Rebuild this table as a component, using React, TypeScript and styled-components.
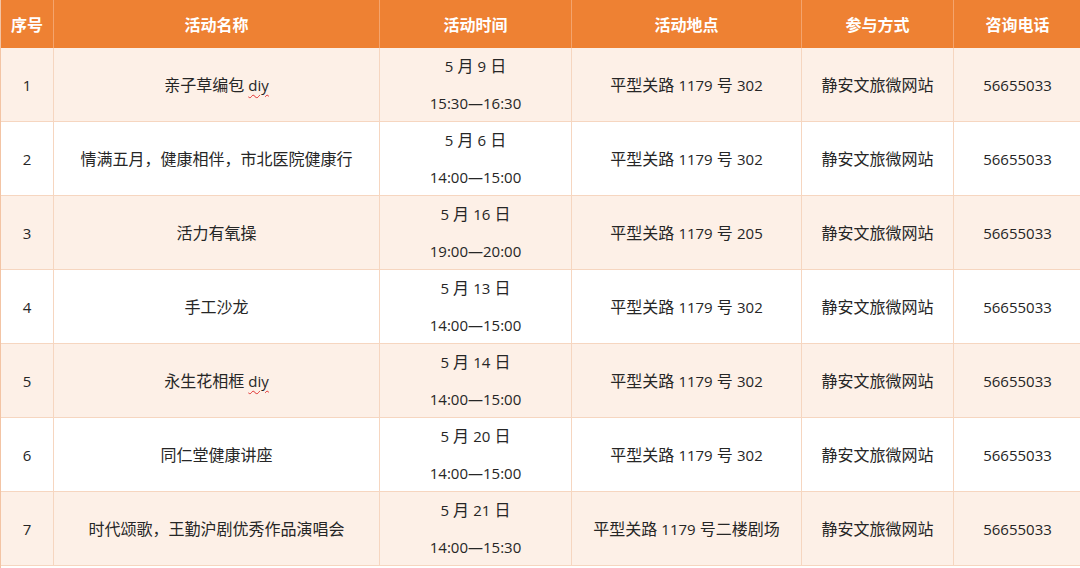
import React from 'react';
import styled, { createGlobalStyle } from 'styled-components';

const GlobalStyle = createGlobalStyle`
  html, body {
    margin: 0;
    padding: 0;
    background: #ffffff;
  }
  body {
    font-family: "Open Sans", "Noto Sans CJK SC", sans-serif;
    color: #262626;
  }
`

const COLUMNS = '52px 326px 192px 230px 152px 128px';

const Table = styled.div`
  width: 1080px;
  height: 568px;
  overflow: hidden;
  box-sizing: border-box;
  border-left: 1px solid #f3c4a4;
`

const HeaderRow = styled.div`
  display: grid;
  grid-template-columns: ${COLUMNS};
  height: 48px;
  background: #ee8133;
`

const HeaderCell = styled.div`
  display: flex;
  align-items: center;
  justify-content: center;
  color: #ffffff;
  font-family: "Noto Sans CJK SC", sans-serif;
  font-size: 16px;
  font-weight: 700;
  border-left: 1px solid #f4a46d;
  &:first-child {
    border-left: none;
  }
`

const Row = styled.div<{ $striped: boolean }>`
  display: grid;
  grid-template-columns: ${COLUMNS};
  height: 74px;
  box-sizing: border-box;
  border-bottom: 1px solid #f6d6c0;
  background: ${(p) => (p.$striped ? '#fdf0e7' : '#ffffff')};
`

const Cell = styled.div`
  display: flex;
  flex-direction: column;
  align-items: center;
  justify-content: center;
  font-size: 16px;
  line-height: 37px;
  border-left: 1px solid #f6d6c0;
  white-space: nowrap;
  &:first-child {
    border-left: none;
  }
`

const Latin = styled.span`
  font-family: "Open Sans", sans-serif;
  font-size: 15px;
`

const Spell = styled.span`
  text-decoration: underline wavy #e03030;
  text-decoration-thickness: 1px;
  text-underline-offset: 3px;
`

type Activity = {
  name: React.ReactNode;
  date: React.ReactNode;
  time: string;
  place: React.ReactNode;
};

const place = (room: string) => (
  <span>
    平型关路 <Latin>1179</Latin> 号{room === '二楼剧场' ? '' : ' '}
    {room === '二楼剧场' ? room : <Latin>{room}</Latin>}
  </span>
);

const date = (day: string) => (
  <span>
    <Latin>5</Latin> 月 <Latin>{day}</Latin> 日
  </span>
);

const activities: Activity[] = [
  { name: <span>亲子草编包 <Latin><Spell>diy</Spell></Latin></span>, date: date('9'), time: '15:30—16:30', place: place('302') },
  { name: '情满五月，健康相伴，市北医院健康行', date: date('6'), time: '14:00—15:00', place: place('302') },
  { name: '活力有氧操', date: date('16'), time: '19:00—20:00', place: place('205') },
  { name: '手工沙龙', date: date('13'), time: '14:00—15:00', place: place('302') },
  { name: <span>永生花相框 <Latin><Spell>diy</Spell></Latin></span>, date: date('14'), time: '14:00—15:00', place: place('302') },
  { name: '同仁堂健康讲座', date: date('20'), time: '14:00—15:00', place: place('302') },
  { name: '时代颂歌，王勤沪剧优秀作品演唱会', date: date('21'), time: '14:00—15:30', place: place('二楼剧场') },
];

const headers = ['序号', '活动名称', '活动时间', '活动地点', '参与方式', '咨询电话'];

export default function App() {
  return (
    <>
      <GlobalStyle />
      <Table>
        <HeaderRow>
          {headers.map((h) => (
            <HeaderCell key={h}>{h}</HeaderCell>
          ))}
        </HeaderRow>
        {activities.map((a, i) => (
          <Row key={i} $striped={i % 2 === 0}>
            <Cell><Latin>{i + 1}</Latin></Cell>
            <Cell>{a.name}</Cell>
            <Cell>
              {a.date}
              <Latin>{a.time}</Latin>
            </Cell>
            <Cell>{a.place}</Cell>
            <Cell>静安文旅微网站</Cell>
            <Cell><Latin>56655033</Latin></Cell>
          </Row>
        ))}
      </Table>
    </>
  );
}
